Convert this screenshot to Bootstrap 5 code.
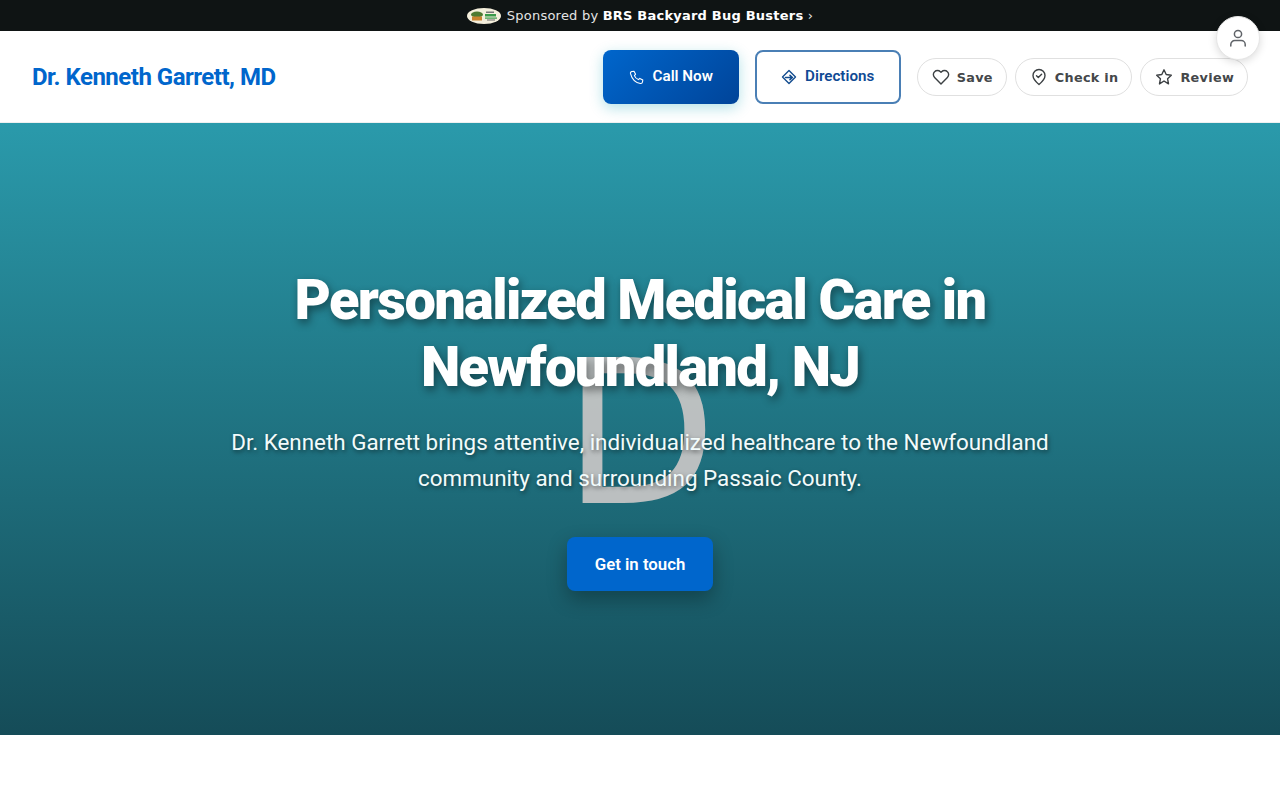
<!DOCTYPE html>
<html lang="en"><head><meta charset="utf-8"><title>Dr. Kenneth Garrett, MD</title>
<link href="https://cdn.jsdelivr.net/npm/bootstrap@5.3.0/dist/css/bootstrap.min.css" rel="stylesheet">
<style>
body{font-family:"DejaVu Sans",sans-serif;background:#fff;overflow:hidden;height:800px}
.spons{height:31px;background:#0f1414;color:#e4e4e4;font-size:13px;letter-spacing:.22px;gap:6px}
.spons b{color:#fff;font-weight:700}
.spons-logo{width:34px;height:16px}
.headbar{height:92px;padding:0 32px;border-bottom:1px solid #eef0f0;gap:16px}
.brand{font-family:Roboto,sans-serif;font-weight:700;font-size:24px;letter-spacing:-.5px;color:#0066cc;margin-right:auto}
.cta{font-family:Roboto,sans-serif;font-weight:600;font-size:15.2px;height:54px;border-radius:8px;gap:8px;display:flex;align-items:center;justify-content:center}
.cta-call{width:136px;color:#fff;background:linear-gradient(135deg,#0066cc,#004499);box-shadow:0 4px 14px rgba(4,160,180,.3);border:0}
.cta-dir{width:146px;color:#0f4a94;background:#fff;border:2px solid #4a7fb5}
.cta svg{margin-top:1px}
.cta-call svg{margin-top:3px}
.cta span{margin-top:-1px}
.pills{gap:8px}
.pill{height:38px;border:1px solid #e0e0e0;border-radius:19px;padding:0 13px 0 14px;background:#fff;color:#44474a;font-size:12.8px;font-weight:700;letter-spacing:.3px;gap:7px}
.pill svg{flex:none}
.pill span{margin-top:2px}
.usr{position:absolute;top:16px;right:20px;width:44px;height:44px;border-radius:50%;background:#fff;border:1px solid #e6e6e6;box-shadow:0 2px 8px rgba(0,0,0,.15);z-index:5}
.hero{height:612px;background:linear-gradient(180deg,#2a9aab 0%,#154c58 100%);position:relative;overflow:hidden;color:#fff;text-align:center;padding-top:144px}
.ghost{position:absolute;left:0;right:0;top:194px;font-size:200px;line-height:233px;color:#c4c4c4;opacity:.95}
.hero-in{position:relative;z-index:1}
.hero h1{font-family:Roboto,sans-serif;font-weight:900;font-size:56px;line-height:67.2px;letter-spacing:-1.68px;text-shadow:2px 4px 8px rgba(0,0,0,.45);margin:0 auto 22.6px;width:800px}
.sub{font-family:Roboto,sans-serif;font-size:22.4px;line-height:36px;color:#f2fbfb;text-shadow:1px 2px 4px rgba(0,0,0,.5);margin:0 auto 41px;width:840px}
.touch{display:flex;align-items:center;justify-content:center;font-family:Roboto,sans-serif;font-weight:600;font-size:16.8px;color:#fff;background:#0066cc;border:0;width:146px;height:54px;padding-top:1px;margin:0 auto;border-radius:8px;box-shadow:0 8px 20px rgba(0,0,0,.3)}
.touch:hover,.cta-call:hover{color:#fff}
</style></head><body>
<div class="spons d-flex align-items-center justify-content-center">
<svg class="spons-logo" viewBox="0 0 34 16"><ellipse cx="17" cy="8" rx="17" ry="8" fill="#f4efdc"/><ellipse cx="10" cy="6.500" rx="6" ry="3" fill="#4d7a32"/><rect x="5" y="8.500" width="10" height="4" fill="#c9832f"/><rect x="19" y="3.500" width="8" height="1.500" fill="#777"/><rect x="18" y="6" width="11" height="2.500" fill="#3a9a4a"/><rect x="18" y="9.500" width="12" height="1.200" fill="#3a9a4a"/><rect x="20" y="11.500" width="8" height="1" fill="#666"/></svg>
<span>Sponsored by <b>BRS Backyard Bug Busters</b> ›</span></div>
<button class="usr d-flex align-items-center justify-content-center p-0" aria-label="Account"><svg width="20" height="20" viewBox="0 0 20 20" fill="none" stroke="#5f6368" stroke-width="1.5" stroke-linecap="round"><circle cx="10" cy="6" r="3.6"/><path d="M2.800 18v-1.500a4 4 0 0 1 4-4h6.400a4 4 0 0 1 4 4V18"/></svg></button>
<header class="headbar d-flex align-items-center">
<a class="brand text-decoration-none" href="#">Dr. Kenneth Garrett, MD</a>
<a class="cta cta-call text-decoration-none" href="#"><svg width="16" height="16" viewBox="0 0 16 16" fill="none" stroke="#fff" stroke-width="1.100" stroke-linejoin="round"><path d="M3 1.500 5 1.200l1.600 3-1.200 1.400c.7 1.800 2.200 3.300 4 4l1.400-1.200 3 1.600-.3 2c-.2 1-1.200 1.700-2.200 1.500C6.500 12.800 3 9.300 1.500 3.700 1.300 2.700 2 1.700 3 1.500z"/></svg><span>Call Now</span></a>
<a class="cta cta-dir text-decoration-none" href="#"><svg width="16" height="16" viewBox="0 0 16 16" fill="none" stroke="#134c8f" stroke-width="1.400" stroke-linejoin="round" stroke-linecap="round"><path d="M8 1.500 14.500 8 8 14.500 1.500 8z"/><path d="M4.500 8.500h6.500M9 6.300l2.400 2.200-2.400 2.200" stroke-width="1.600"/></svg><span>Directions</span></a>
<div class="pills d-flex">
<button class="pill d-flex align-items-center"><svg width="18" height="18" viewBox="0 0 18 18" fill="none" stroke="#3c4043" stroke-width="1.400" stroke-linejoin="round"><path d="M9 16 2.600 9.500a4 4 0 0 1 0-5.800 4.100 4.100 0 0 1 5.800 0l.6.600.6-.6a4.100 4.100 0 0 1 5.800 0 4 4 0 0 1 0 5.800z"/></svg><span>Save</span></button>
<button class="pill d-flex align-items-center"><svg width="18" height="18" viewBox="0 0 18 18" fill="none" stroke="#3c4043" stroke-width="1.400" stroke-linejoin="round" stroke-linecap="round"><path d="M9 16.500C6 14 3 11 3 7.500a6 6 0 0 1 12 0C15 11 12 14 9 16.500z"/><path d="m6.500 7.800 1.800 1.800 3.300-3.300"/></svg><span>Check in</span></button>
<button class="pill d-flex align-items-center"><svg width="18" height="18" viewBox="0 0 18 18" fill="none" stroke="#3c4043" stroke-width="1.400" stroke-linejoin="round"><path d="m9 1.800 2.200 4.700 5.100.7-3.700 3.600.9 5.100L9 13l-4.500 2.900.9-5.100-3.700-3.600 5.100-.7z"/></svg><span>Review</span></button>
</div>
</header>
<section class="hero">
<div class="ghost">D</div>
<div class="hero-in">
<h1>Personalized Medical Care in Newfoundland, NJ</h1>
<p class="sub">Dr. Kenneth Garrett brings attentive, individualized healthcare to the Newfoundland community and surrounding Passaic County.</p>
<a class="touch text-decoration-none" href="#">Get in touch</a>
</div>
</section>
</body></html>
